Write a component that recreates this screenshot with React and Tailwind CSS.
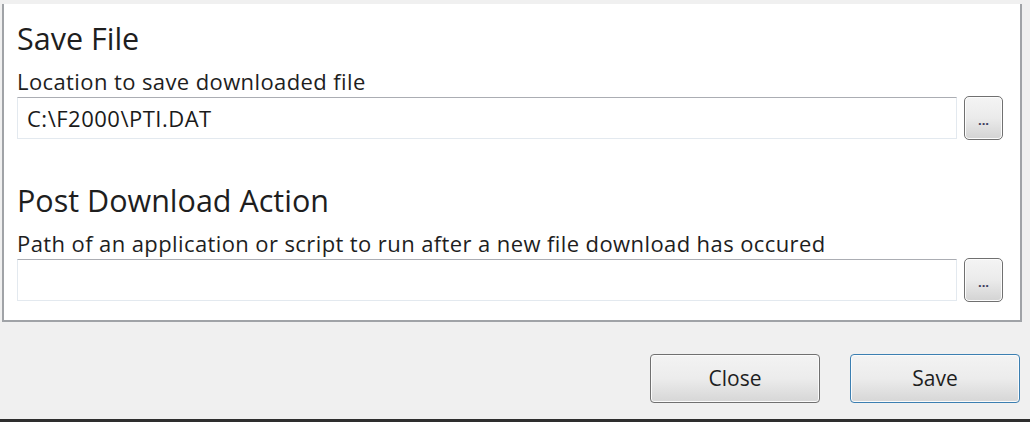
import React from 'react';

const FONT = { fontFamily: '"Open Sans", "Noto Sans", sans-serif' };

const BrowseButton = () => (
  <button className="w-[39px] h-[44px] shrink-0 rounded-[5px] border border-[#707070] bg-gradient-to-b from-[#f4f4f4] via-[#ebebeb] to-[#d3d3d3] shadow-[inset_0_0_0_1px_#fcfcfc] flex items-end justify-center pb-[12px] text-[13px] font-bold leading-none text-[#3a3a5a]">
    ...
  </button>
);

const PathField = ({ value }) => (
  <div className="flex items-center gap-[7px]">
    <div className="w-[940px] h-[42px] border border-[#e3e9ef] border-t-[#abadb3] bg-white flex items-center pl-[9px] text-[22px] tracking-[0.5px] text-[#1a1a1a]">
      {value}
    </div>
    <BrowseButton />
  </div>
);

const Section = ({ title, hint, value, top }) => (
  <div className={top}>
    <h2 className="text-[30.5px] leading-[30px] text-[#1e1e1e]">{title}</h2>
    <p className="mt-[16px] mb-[3px] text-[22px] tracking-[0.4px] leading-[24px] text-[#1e1e1e]">{hint}</p>
    <PathField value={value} />
  </div>
);

const DialogButton = ({ label, primary }) => (
  <button
    className={`w-[170px] h-[49px] rounded-[4px] border bg-gradient-to-b from-[#f3f3f3] via-[#ececec] to-[#d6d6d6] shadow-[inset_0_0_0_1px_#fbfbfb] text-[21px] text-[#1e1e1e] ${
      primary ? 'border-[#3c7fb1]' : 'border-[#707070]'
    }`}
  >
    {label}
  </button>
);

export default function App() {
  return (
    <div className="w-[1030px] h-[422px] bg-[#f0f0f0] flex flex-col overflow-hidden" style={FONT}>
      <div className="ml-[2px] mt-[4px] w-[1020px] h-[318px] bg-white border-x-2 border-b-2 border-[#a0a3a7] pl-[13px] flex flex-col">
        <Section title="Save File" hint="Location to save downloaded file" value="C:\F2000\PTI.DAT" top="mt-[19px]" />
        <Section
          title="Post Download Action"
          hint="Path of an application or script to run after a new file download has occured"
          value=""
          top="mt-[45px]"
        />
      </div>
      <div className="flex justify-end gap-[30px] pr-[10px] mt-[32px]">
        <DialogButton label="Close" />
        <DialogButton label="Save" primary />
      </div>
      <div className="mt-auto h-[3px] bg-[#2e2e2e]" />
    </div>
  );
}
